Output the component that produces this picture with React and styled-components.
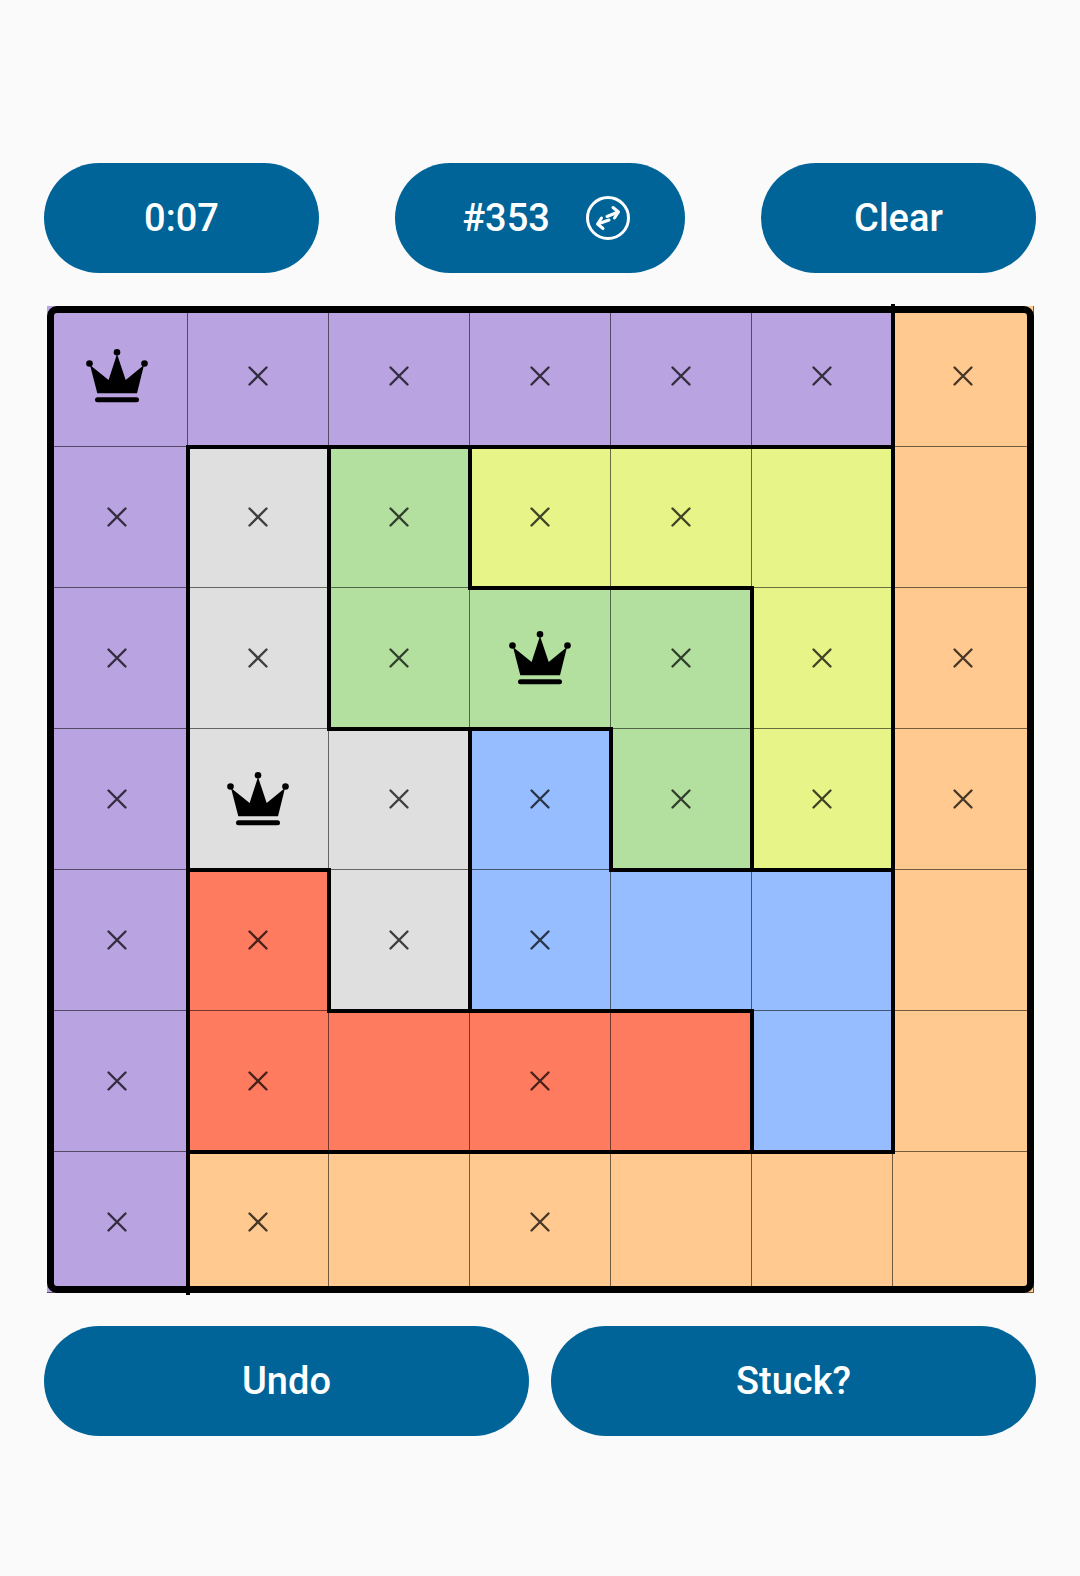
import React from "react";
import styled, { createGlobalStyle } from "styled-components";

const REGIONS = [
  "PPPPPPO",
  "PWGYYYO",
  "PWGGGYO",
  "PWWBGYO",
  "PRWBBBO",
  "PRRRRBO",
  "POOOOOO",
];

const MARKS = [
  "Qxxxxxx",
  "xxxxx..",
  "xxxQxxx",
  "xQxxxxx",
  "xxxx...",
  "xx.x...",
  "xx.x...",
];

const COLORS = {
  P: "#b9a3e0",
  W: "#dfdfdf",
  G: "#b3e09f",
  Y: "#e6f488",
  B: "#96bdff",
  R: "#ff7b5f",
  O: "#ffc98f",
};

const GlobalStyle = createGlobalStyle`
  html, body {
    margin: 0;
    padding: 0;
    background: #fafafa;
  }
  body {
    font-family: Roboto, "Liberation Sans", sans-serif;
  }
`;

const Page = styled.div`
  width: 1080px;
  height: 1576px;
  box-sizing: border-box;
  padding: 163px 44px 0;
  display: flex;
  flex-direction: column;
  background: #fafafa;
`;

const TopBar = styled.div`
  display: flex;
  justify-content: space-between;
`;

const BottomBar = styled.div`
  display: flex;
  justify-content: space-between;
  margin-top: 33px;
`;

const Pill = styled.button`
  width: ${({ $width }) => $width}px;
  height: 110px;
  box-sizing: border-box;
  padding: 0 0 0 ${({ $shift }) => $shift || 0}px;
  border: none;
  border-radius: 55px;
  background: #006499;
  color: #fff;
  font-family: Roboto, "Liberation Sans", sans-serif;
  font-size: 38px;
  font-weight: 500;
  display: flex;
  align-items: center;
  justify-content: center;
  gap: 36px;
`;

const Board = styled.div`
  position: relative;
  width: 987px;
  height: 987px;
  margin: 33px 0 0 3px;
  display: grid;
  grid-template-columns: repeat(7, 141px);
  grid-template-rows: repeat(7, 141px);

  &::after {
    content: "";
    position: absolute;
    inset: 0;
    border: 7px solid #000;
    border-radius: 10px;
    z-index: 3;
    pointer-events: none;
  }
`;

const Cell = styled.div`
  position: relative;
  box-sizing: border-box;
  background: ${({ $color }) => $color};
  border-right: 1.5px solid rgba(0, 0, 0, 0.55);
  border-bottom: 1.5px solid rgba(0, 0, 0, 0.55);
  display: flex;
  align-items: center;
  justify-content: center;
`;

const RightEdge = styled.span`
  position: absolute;
  top: -2px;
  bottom: -3px;
  right: -3px;
  width: 4px;
  background: #000;
  z-index: 2;
`;

const BottomEdge = styled.span`
  position: absolute;
  left: -2px;
  right: -3px;
  bottom: -3px;
  height: 4px;
  background: #000;
  z-index: 2;
`;

const Crown = () => (
  <svg width="64" height="56" viewBox="0 0 64 56" fill="#000">
    <circle cx="4.5" cy="15.5" r="3.3" />
    <circle cx="32" cy="4.3" r="3.3" />
    <circle cx="59.5" cy="15.5" r="3.3" />
    <path d="M5 17 L12.3 45.3 H52 L59 17 L40.7 32 L32 6 L23.6 32 Z" />
    <rect x="10" y="49.3" width="44" height="5" rx="2.5" />
  </svg>
);

const Cross = () => (
  <svg width="22" height="22" viewBox="0 0 22 22" fill="none" stroke="#000" strokeOpacity="0.72" strokeWidth="2.4" strokeLinecap="round">
    <path d="M2.5 2.5 L19.5 19.5 M19.5 2.5 L2.5 19.5" />
  </svg>
);

const SwapIcon = () => (
  <svg width="44" height="44" viewBox="0 0 44 44" fill="none" stroke="#fff" strokeWidth="3">
    <circle cx="22" cy="22" r="20.5" />
    <path d="M21 20.5 L31 16.5 M27 11.5 L32.5 16 L28.5 22" strokeLinecap="round" strokeLinejoin="round" />
    <path d="M23 24 L13 27.5 M17 32.5 L11.5 28 L15.5 22" strokeLinecap="round" strokeLinejoin="round" />
  </svg>
);

const differs = (r, c, r2, c2) =>
  REGIONS[r2] && REGIONS[r2][c2] && REGIONS[r2][c2] !== REGIONS[r][c];

const App = () => {
  return (
    <Page>
      <GlobalStyle />
      <TopBar>
        <Pill $width={275}>0:07</Pill>
        <Pill $width={290} $shift={12}>
          #353
          <SwapIcon />
        </Pill>
        <Pill $width={275}>Clear</Pill>
      </TopBar>
      <Board>
        {REGIONS.map((row, r) =>
          row.split("").map((region, c) => (
            <Cell key={`${r}-${c}`} $color={COLORS[region]}>
              {MARKS[r][c] === "Q" && <Crown />}
              {MARKS[r][c] === "x" && <Cross />}
              {differs(r, c, r, c + 1) && <RightEdge />}
              {differs(r, c, r + 1, c) && <BottomEdge />}
            </Cell>
          ))
        )}
      </Board>
      <BottomBar>
        <Pill $width={485}>Undo</Pill>
        <Pill $width={485}>Stuck?</Pill>
      </BottomBar>
    </Page>
  );
};

export default App;
